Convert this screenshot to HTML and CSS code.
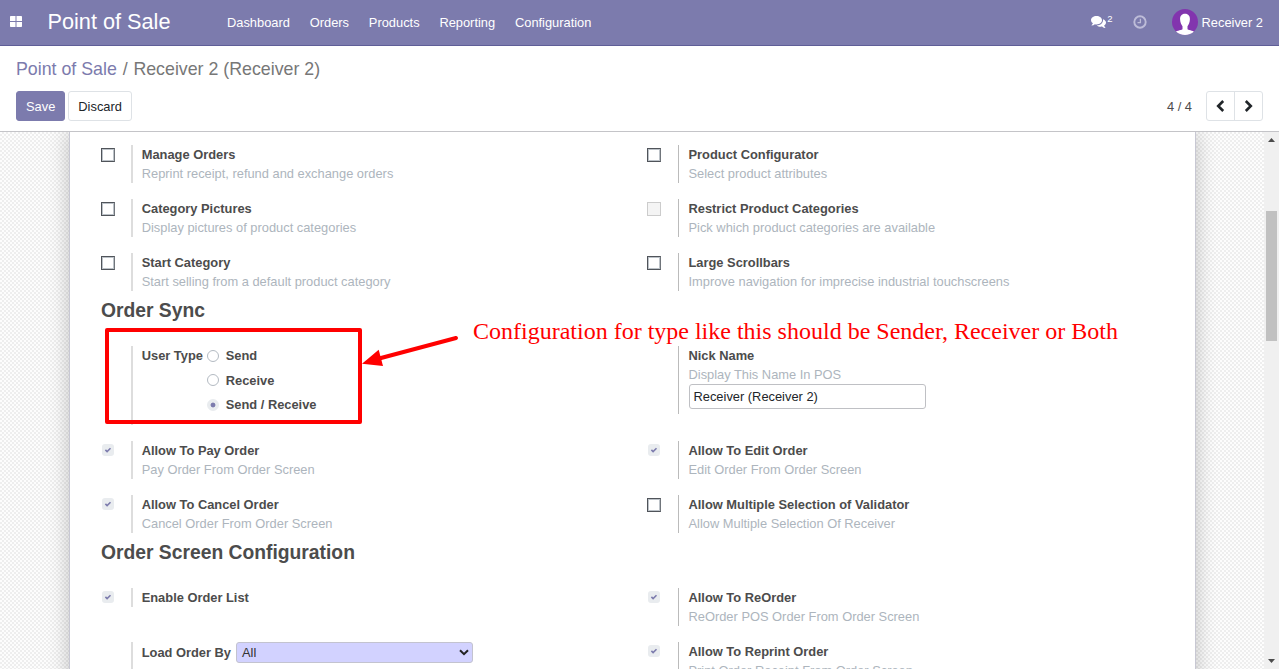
FILE: index.html
```html
<!DOCTYPE html>
<html lang="en">
<head>
<meta charset="utf-8">
<title>Point of Sale</title>
<link rel="stylesheet" href="styles.css">
</head>
<body>
<header class="navbar">
  <svg class="apps" width="12" height="11" viewBox="0 0 12 11"><path fill="#fff" d="M0 .8Q0 0 .8 0h4.700v5H0zM6.500 0h4.700q.8 0 .8.8V5H6.500zM0 6h5.500v5H.8q-.8 0-.8-.8zM6.500 6H12v4.200q0 .8-.8.8H6.500z"/></svg>
  <span class="brand">Point of Sale</span>
  <nav class="menu"><span>Dashboard</span><span>Orders</span><span>Products</span><span>Reporting</span><span>Configuration</span></nav>
  <div class="systray">
    <svg class="chat" width="15" height="13" viewBox="0 0 15 13"><path fill="#fff" d="M5.500 0C8.600 0 11 1.900 11 4.200S8.600 8.400 5.500 8.400q-.8 0-1.600-.2Q2.500 9.400.7 9.500q-.4-.2 0-.5Q1.700 8 1.900 7.200 0 6 0 4.200C0 1.900 2.400 0 5.500 0z"/><path fill="#fff" d="M12 3.200c1.800.7 3 1.900 3 3.400 0 1.300-.8 2.300-1.900 3 .2.900.7 1.300 1.200 1.900.3.400 0 .6-.4.500-1.300-.2-2.200-.7-2.800-1.400-2.200.3-4.100-.1-5.400-1.200C9.500 9.300 12.500 7 12 3.200z"/></svg>
    <sup class="count">2</sup>
    <svg class="clock" width="14" height="14" viewBox="0 0 14 14" fill="none" stroke="#bdbcd8"><circle cx="7" cy="7" r="5.700" stroke-width="1.900"/><path stroke-width="1.300" d="M7.400 3.700v4H4.500"/></svg>
    <svg class="avatar" width="26" height="26" viewBox="0 0 26 26"><defs><clipPath id="disc"><circle cx="13" cy="13" r="13"/></clipPath></defs><g clip-path="url(#disc)"><path fill="#8235ae" d="M0 0h26v26H0z"/><path fill="#fff" d="M13 4.700c3.400 0 5.200 2.500 4.900 5.900-.2 3-1 5.100-2.400 6.600v2.900c0 1.300 5.500 1.200 7.300 3.400L20 26H6l-3-2.500c2-2.200 7.500-2.100 7.500-3.400v-2.900C9.100 15.700 8.300 13.600 8.100 10.600 7.800 7.200 9.600 4.700 13 4.700z"/></g></svg>
    <span class="user">Receiver 2</span>
  </div>
</header>
<section class="panel">
  <div class="crumbs"><span class="link">Point of Sale</span><span class="slash">/</span><span>Receiver 2 (Receiver 2)</span></div>
  <div class="actions">
    <button class="btn primary">Save</button><button class="btn">Discard</button>
    <span class="pages">4 / 4</span>
    <div class="pager">
      <span><svg width="9" height="12" viewBox="0 0 9 12"><path d="M7.200 1 2.200 6l5 5"/></svg></span>
      <span><svg width="9" height="12" viewBox="0 0 9 12"><path d="m1.800 1 5 5-5 5"/></svg></span>
    </div>
  </div>
</section>
<main class="content">
  <div class="canvas">
    <div class="sheet">
      <div class="grid">
        <div class="item"><i class="box"></i><div class="text"><b>Manage Orders</b><p>Reprint receipt, refund and exchange orders</p></div></div>
        <div class="item"><i class="box"></i><div class="text"><b>Product Configurator</b><p>Select product attributes</p></div></div>
        <div class="item"><i class="box"></i><div class="text"><b>Category Pictures</b><p>Display pictures of product categories</p></div></div>
        <div class="item"><i class="box off"></i><div class="text"><b>Restrict Product Categories</b><p>Pick which product categories are available</p></div></div>
        <div class="item"><i class="box"></i><div class="text"><b>Start Category</b><p>Start selling from a default product category</p></div></div>
        <div class="item"><i class="box"></i><div class="text"><b>Large Scrollbars</b><p>Improve navigation for imprecise industrial touchscreens</p></div></div>
      </div>
      <h2>Order Sync</h2>
      <div class="grid">
        <div class="item"><div class="text types"><b>User Type</b>
          <div class="radios"><label><i class="radio"></i>Send</label><label><i class="radio"></i>Receive</label><label><i class="radio on"></i>Send / Receive</label></div></div></div>
        <div class="item"><div class="text nick"><b>Nick Name</b><p>Display This Name In POS</p><div class="field">Receiver (Receiver 2)</div></div></div>
        <div class="item"><i class="tick"><svg viewBox="0 0 12 12"><path d="m3.400 5.900 1.700 1.700 3.400-3.300"/></svg></i><div class="text"><b>Allow To Pay Order</b><p>Pay Order From Order Screen</p></div></div>
        <div class="item"><i class="tick"><svg viewBox="0 0 12 12"><path d="m3.400 5.900 1.700 1.700 3.400-3.300"/></svg></i><div class="text"><b>Allow To Edit Order</b><p>Edit Order From Order Screen</p></div></div>
        <div class="item"><i class="tick"><svg viewBox="0 0 12 12"><path d="m3.400 5.900 1.700 1.700 3.400-3.300"/></svg></i><div class="text"><b>Allow To Cancel Order</b><p>Cancel Order From Order Screen</p></div></div>
        <div class="item"><i class="box"></i><div class="text"><b>Allow Multiple Selection of Validator</b><p>Allow Multiple Selection Of Receiver</p></div></div>
      </div>
      <h2>Order Screen Configuration</h2>
      <div class="grid">
        <div class="item"><i class="tick"><svg viewBox="0 0 12 12"><path d="m3.400 5.900 1.700 1.700 3.400-3.300"/></svg></i><div class="text"><b>Enable Order List</b></div></div>
        <div class="item"><i class="tick"><svg viewBox="0 0 12 12"><path d="m3.400 5.900 1.700 1.700 3.400-3.300"/></svg></i><div class="text"><b>Allow To ReOrder</b><p>ReOrder POS Order From Order Screen</p></div></div>
        <div class="item"><div class="text load"><b>Load Order By</b><div class="select">All<svg width="10" height="7" viewBox="0 0 10 7"><path d="m1 1.200 4 4 4-4"/></svg></div></div></div>
        <div class="item"><i class="tick"><svg viewBox="0 0 12 12"><path d="m3.400 5.900 1.700 1.700 3.400-3.300"/></svg></i><div class="text"><b>Allow To Reprint Order</b><p>Print Order Receipt From Order Screen</p></div></div>
      </div>
    </div>
  </div>
  <div class="scrollbar">
    <svg width="7" height="4" viewBox="0 0 7 4"><path d="M3.500 0 7 4H0z"/></svg>
    <div class="thumb"></div>
    <svg width="7" height="4" viewBox="0 0 7 4"><path d="M0 0h7L3.500 4z"/></svg>
  </div>
</main>
<div class="highlight"></div>
<svg class="arrow" width="100" height="34" viewBox="0 0 100 34"><path d="M20 25 95 5" stroke="#f00" stroke-width="4" stroke-linecap="round"/><path fill="#f00" d="M1 30.800 17.700 16.800 22 33z"/></svg>
<div class="note">Configuration for type like this should be Sender, Receiver or Both</div>
</body>
</html>
```
FILE: styles.css
```css
* { box-sizing: border-box; }
body {
  margin: 0;
  width: 1279px;
  height: 669px;
  overflow: hidden;
  display: flex;
  flex-direction: column;
  background: #fff;
  color: #4c4c4c;
  font: 12.860px/19px "Liberation Sans", Arial, sans-serif;
}
svg { display: block; flex: none; }
p, h2 { margin: 0; }

.navbar {
  flex: none;
  height: 46px;
  display: flex;
  align-items: center;
  padding: 0 16px 1px 10px;
  background: #7c7bad;
  border-bottom: 1px solid #5f5e97;
  color: #fff;
}
.apps { margin-top: -1px; }
.brand { margin-left: 25.500px; font-size: 21.700px; line-height: 30px; width: 179.500px; white-space: nowrap; }
.menu { display: flex; gap: 19.800px; }
.systray { margin-left: auto; display: flex; align-items: center; }
.count { font-size: 9.500px; line-height: 12px; margin: -7px 20px 0 1px; }
.clock, .avatar { margin-top: -1px; }
.clock { margin-right: 25px; }
.avatar { margin-right: 4px; }

.panel { flex: none; height: 86px; padding: 9px 16px 0; border-bottom: 1px solid #c4c4c8; }
.crumbs { font-size: 17.800px; line-height: 28px; color: #777; display: flex; }
.link { color: #7c7bad; }
.slash { margin: 0 5.800px; }
.actions { display: flex; align-items: center; margin-top: 8px; }
.btn {
  height: 30px;
  padding: 0 9px;
  margin-right: 3px;
  border: 1px solid #dee2e6;
  border-radius: 3px;
  background: #fff;
  color: #212529;
  font: inherit;
}
.btn.primary { background: #7c7bad; border-color: #7c7bad; color: #fff; }
.pages { margin-left: auto; margin-right: 14px; }
.pager { display: flex; width: 57px; height: 30px; border: 1px solid #dee2e6; border-radius: 3px; }
.pager span { flex: 1; display: flex; align-items: center; justify-content: center; }
.pager span + span { border-left: 1px solid #dee2e6; }
.pager path { fill: none; stroke: #212529; stroke-width: 2.600; }

.content { flex: 1; min-height: 0; display: flex; }
.canvas {
  flex: 1;
  padding: 0 68px 0 69px;
  overflow: hidden;
  background: repeating-conic-gradient(#eee 0 25%, #fdfdfd 0 50%) 0 0 / 4px 4px;
}
.sheet {
  height: 700px;
  padding: 13px 0 0 31px;
  background: #fff;
  border: solid #c8c8d3;
  border-width: 0 1px;
  box-shadow: 0 0 20px rgba(0, 0, 0, .23);
}
.grid { display: grid; grid-template-columns: 546.500px 546.500px; row-gap: 16px; align-items: start; }
.item { display: grid; grid-template-columns: 30px 1fr; align-items: start; }
.text { grid-column: 2; border-left: 2px solid #ddd; padding-left: 8.700px; min-height: 19px; }
.item:nth-child(even) .text { border-left: 1px solid #bbb; padding-left: 10px; }
.text b { display: block; }
.text p { color: #adb5bd; }
h2 { height: 55px; font-size: 19.290px; line-height: 40px; }

.box { width: 14px; height: 14px; margin-top: 3px; background: #fff; border: 1px solid #50545a; border-right-color: #70757b; box-shadow: inset 0 0 0 1px #bcc2c8; }
.item:nth-child(even) .box { margin-left: -.6px; }
.item:nth-child(even) .tick { margin-left: .4px; }
.box.off { background: #f4f4f4; border-color: #ccc; box-shadow: none; }
.tick { width: 12px; height: 12px; margin: 3px 0 0 1px; border-radius: 3px; background: #e9ecef; }
.tick path { fill: none; stroke: #7c7bad; stroke-width: 1.600; }

.types { display: flex; height: 79px; }
.radios { margin-left: 4.500px; font-weight: bold; }
.radios label { display: flex; align-items: center; margin-bottom: 5.500px; }
.radio { width: 12px; height: 12px; border: 1px solid #b3bac2; border-radius: 50%; margin-right: 6.300px; }
.radio.on { border-color: #e9ecef; background: radial-gradient(circle, #7c7bad 0 2px, #e9ecef 2.800px); }
.nick { height: 68px; }
.field { width: 237.500px; height: 25px; padding: 2px 4px; border: 1px solid #bfc0c4; border-radius: 3px; color: #212529; }
.load { display: flex; height: 60px; }
.load b { line-height: 21px; }
.select { display: flex; align-items: center; justify-content: space-between; width: 237px; height: 21px; margin-left: 5px; padding: 0 3px 0 5px; border: 1px solid #c3c3cf; border-radius: 3px; background: #d2d2ff; color: #333; }
.select path { fill: none; stroke: #222; stroke-width: 2; }

.scrollbar { width: 15px; background: #f0f0f0; display: flex; flex-direction: column; align-items: center; padding: 6px 0; }
.scrollbar path { fill: #4b4b4b; }
.thumb { width: 11px; height: 130px; margin: 69px 0 auto; background: #c1c1c1; }

.highlight { position: absolute; left: 105px; top: 328px; width: 257px; height: 96px; border: 4px solid #f00; border-radius: 2px; }
.arrow { position: absolute; left: 361px; top: 333px; }
.note { position: absolute; left: 473px; top: 317px; color: #f00; font: 24px/28px "Liberation Serif", serif; white-space: nowrap; }
```
